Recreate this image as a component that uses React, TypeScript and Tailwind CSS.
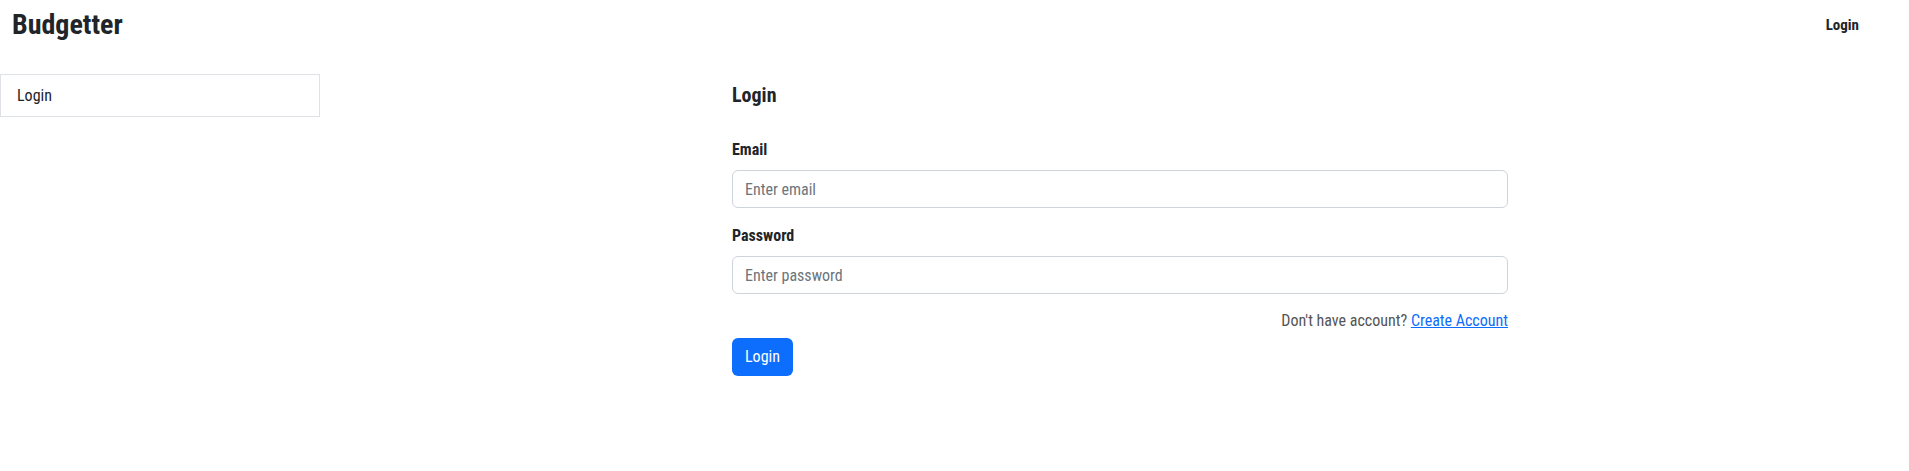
import React, { useState } from 'react';

const font = "font-['Roboto','Noto_Sans',sans-serif] font-stretch-condensed";

export default function App() {
  const [email, setEmail] = useState('');
  const [password, setPassword] = useState('');

  return (
    <div className={`${font} min-h-[471px] w-full bg-white text-[#212529]`}>
      {/* Top bar */}
      <nav className="flex items-center justify-between h-[50px] pl-3 pr-[50px]">
        <span className="text-[28px] font-bold leading-none">Budgetter</span>
        <a className="text-[15px] font-bold cursor-pointer">Login</a>
      </nav>

      <div className="flex mt-[24px]">
        {/* Sidebar */}
        <aside className="w-[320px] shrink-0">
          <div className="border border-[#dee2e6] h-[43px] flex items-center pl-[16px] text-[16px]">
            Login
          </div>
        </aside>

        {/* Main */}
        <main className="ml-[412px] w-[776px] pt-[9px]">
          <h2 className="text-[20px] font-bold leading-[24px] mb-[31px]">Login</h2>

          <label className="block text-[16px] font-bold leading-[24px] mb-[8px]">Email</label>
          <input
            type="email"
            value={email}
            onChange={(e) => setEmail(e.target.value)}
            placeholder="Enter email"
            className="w-full h-[38px] px-3 rounded-[6px] border border-[#ced4da] text-[16px] placeholder:text-[#6c757d] focus:outline-none"
          />

          <label className="block text-[16px] font-bold leading-[24px] mt-[16px] mb-[8px]">Password</label>
          <input
            type="password"
            value={password}
            onChange={(e) => setPassword(e.target.value)}
            placeholder="Enter password"
            className="w-full h-[38px] px-3 rounded-[6px] border border-[#ced4da] text-[16px] placeholder:text-[#6c757d] focus:outline-none"
          />

          <p className="text-right text-[16px] text-[#555] mt-[15px] leading-[24px]">
            Don't have account?{' '}
            <a className="text-[#0d6efd] underline cursor-pointer">Create Account</a>
          </p>

          <button
            type="button"
            className="mt-[5px] h-[38px] px-[13px] rounded-[6px] bg-[#0d6efd] text-white text-[16px]"
          >
            Login
          </button>
        </main>
      </div>
    </div>
  );
}
